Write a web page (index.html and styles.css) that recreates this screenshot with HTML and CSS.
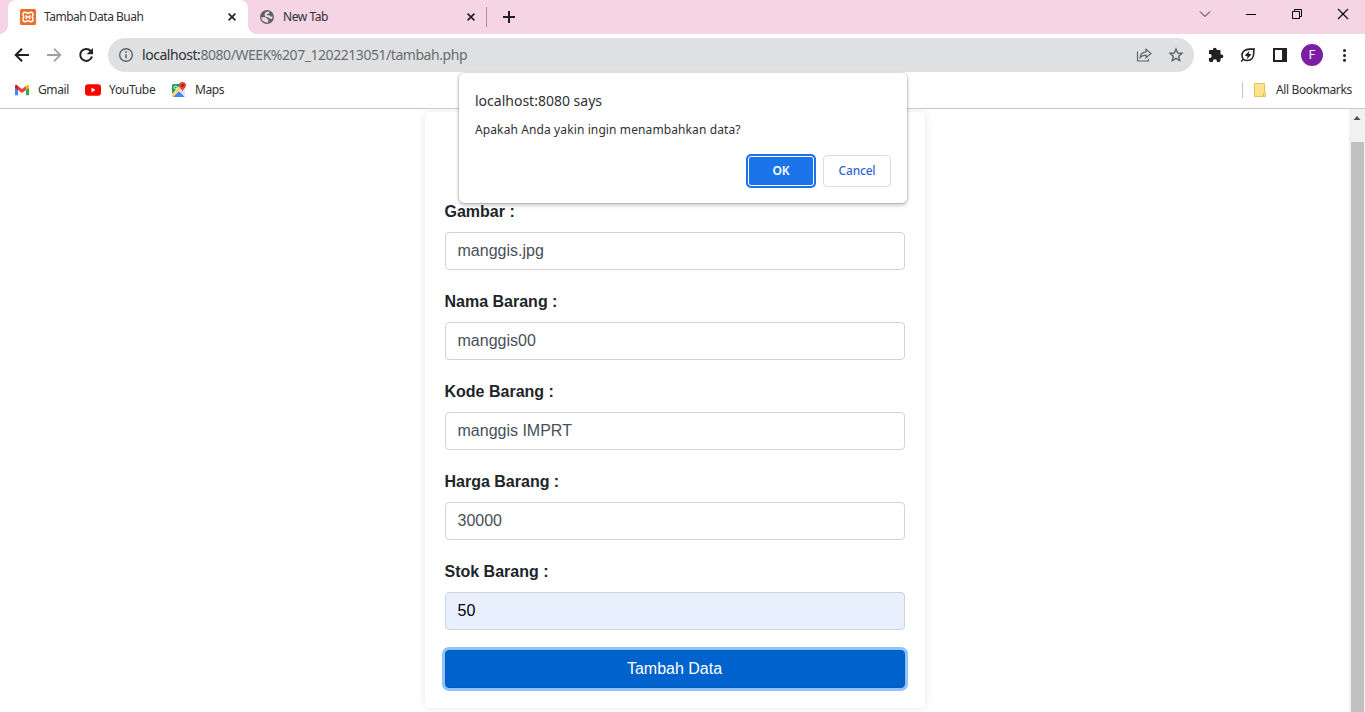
FILE: index.html
```html
<!DOCTYPE html>
<html lang="id">
<head>
<meta charset="utf-8">
<title>Tambah Data Buah</title>
<link rel="stylesheet" href="styles.css">
</head>
<body>
<header class="tabs">
  <div class="tab tab-active">
    <svg class="favicon" width="16" height="16" viewBox="0 0 16 16"><rect width="16" height="16" rx="1.5" fill="#e8702a"/><path d="M5.300 3.300C4 3.300 3 4.200 3 5.500S3.700 7.300 3.700 8 3 9.200 3 10.500s1 2.200 2.300 2.200S7 11.600 8 11.600s1.400 1.100 2.700 1.100S13 11.800 13 10.500s-.7-1.800-.7-2.500.7-1.200.7-2.500-1-2.200-2.300-2.200S9 4.400 8 4.400 6.600 3.300 5.300 3.300z" fill="none" stroke="#fff" stroke-width="1.500"/><path d="M6.200 6v4M9.800 6v4M6.200 8h3.600" stroke="#fff" stroke-width="1.300"/></svg>
    <span class="tab-title title-one">Tambah Data Buah</span>
    <svg class="close" width="8" height="8" viewBox="0 0 8 8"><path d="M.6.6l6.800 6.800M7.400.6L.6 7.400" stroke="#202124" stroke-width="1.600"/></svg>
  </div>
  <div class="tab tab-second">
    <svg class="favicon" width="16" height="16" viewBox="0 0 16 16"><circle cx="8" cy="8" r="7" fill="#5f6368"/><path d="M2.300 8.300h3.900c1.300 0 1.900.8 1.900 2h1.200v3.200C5.200 14 2.300 11.500 2.300 8.300zM9.300 2.500l1 .3c0 1.500-.6 2.100-2 2.200-.7 0-.6 1.300.2 1.300h1.300c.8 0 1.200.5 1.200 1.300h2.500v1.500l-1 1.200c-.5-.6-.9-.9-1.800-.9-.7 0-1.200-.5-1.300-1.200-2.400.2-3.800-.6-3.800-2.600 0-1.500 1-2.700 3.700-3.100z" fill="#f5d5e3"/></svg>
    <span class="tab-title title-two">New Tab</span>
    <svg class="close" width="8" height="8" viewBox="0 0 8 8"><path d="M.6.6l6.800 6.800M7.400.6L.6 7.400" stroke="#202124" stroke-width="1.600"/></svg>
  </div>
  <i class="tab-line"></i>
  <svg class="plus" width="12" height="12" viewBox="0 0 12 12"><path d="M6 0v12M0 6h12" stroke="#202124" stroke-width="2"/></svg>
  <div class="window-controls">
    <svg width="12" height="12" viewBox="0 0 12 12"><path d="M1 3.500l5 5 5-5" fill="none" stroke="#222"/></svg>
    <svg width="12" height="12" viewBox="0 0 12 12"><path d="M1 6.500h10" stroke="#000"/></svg>
    <svg width="12" height="12" viewBox="0 0 12 12"><path d="M1.500 3.500h7v7h-7zM3.500 3.500v-2h7v7h-2" fill="none" stroke="#000"/></svg>
    <svg width="12" height="12" viewBox="0 0 12 12"><path d="M1 1l10 10M11 1L1 11" stroke="#000" stroke-width="1.100"/></svg>
  </div>
</header>
<nav class="toolbar">
  <div class="nav-buttons">
    <svg width="16" height="16" viewBox="0 0 16 16"><path d="M15 8H2M8 1.700L1.700 8 8 14.300" fill="none" stroke="#202124" stroke-width="2"/></svg>
    <svg width="16" height="16" viewBox="0 0 16 16"><path d="M1 8h13M8 1.700L14.300 8 8 14.300" fill="none" stroke="#a0a1a3" stroke-width="1.800"/></svg>
    <svg width="16" height="16" viewBox="0 0 16 16"><path d="M12.800 4A6 6 0 1 0 14 9.500" fill="none" stroke="#202124" stroke-width="2"/><path d="M15 1v6.300H8.700z" fill="#202124"/></svg>
  </div>
  <div class="address">
    <svg width="16" height="16" viewBox="0 0 16 16"><circle cx="8" cy="8" r="6.300" fill="none" stroke="#5f6368" stroke-width="1.400"/><path d="M8 7.200v4M8 4.300v1.600" stroke="#5f6368" stroke-width="1.600"/></svg>
    <span class="url"><b class="host">localhost:</b>8080/WEEK%207_1202213051/tambah.php</span>
    <svg class="share" width="16" height="16" viewBox="0 0 16 16"><path d="M1.500 4.500v9.500h11v-2M4.200 10.500c.3-3.700 2.300-5.400 5.800-5.700V2.200l5 4.300-5 4.200V8.200c-2.600 0-4.400.6-5.800 2.300z" fill="none" stroke="#5f6368" stroke-width="1.200"/></svg>
    <svg class="star" width="16" height="16" viewBox="0 0 16 16"><path d="M8 2l1.700 4 4.300.4-3.300 2.900 1 4.300L8 11.300l-3.700 2.300 1-4.300L2 6.400 6.300 6z" fill="none" stroke="#5f6368" stroke-width="1.400"/></svg>
  </div>
  <div class="extensions">
    <svg width="16" height="16" viewBox="0 0 16 16"><path d="M13.500 7.500h-1V4.300c0-.8-.6-1.300-1.300-1.300H8.700V2.600a1.900 1.900 0 0 0-3.800 0V3H2.300C1.500 3 1 3.500 1 4.300v2.600h.7a2 2 0 0 1 0 4H1v2.700c0 .8.500 1.400 1.300 1.400h2.600v-.7a2 2 0 0 1 4 0v.7h2.300c.8 0 1.300-.6 1.300-1.400v-2.400h1a1.850 1.850 0 0 0 0-3.700z" fill="#202124"/></svg>
    <svg width="16" height="16" viewBox="0 0 16 16"><path d="M14 2c-1 .2-2.300.1-4.500.1C5 2.100 2 4.500 2 8.500c0 3 2.300 5 5.400 5 4 0 6.300-3 6.300-7.200 0-2 .1-3.300.3-4.300zM3.700 11.800l-2.500 2.700" fill="none" stroke="#202124" stroke-width="1.600"/><path d="M9.500 3.800L4.700 8.500l2.800.7-.7 3L11.500 7.500l-2.800-.7z" fill="#202124"/></svg>
    <svg width="16" height="16" viewBox="0 0 16 16"><path d="M1 1h14v14H1zM3 3v10h7V3z" fill="#202124" fill-rule="evenodd"/></svg>
    <span class="avatar">F</span>
    <svg width="16" height="16" viewBox="0 0 16 16"><g fill="#202124"><circle cx="8.500" cy="3.500" r="1.500"/><circle cx="8.500" cy="8.500" r="1.500"/><circle cx="8.500" cy="13.300" r="1.500"/></g></svg>
  </div>
</nav>
<div class="bookmarks">
  <svg width="16" height="16" viewBox="0 0 16 16"><path d="M1 4v9.300h3V7z" fill="#4285f4"/><path d="M12 7v6.300h3V4z" fill="#34a853"/><path d="M12 4v4l3-2.200V4c0-1.600-1.700-2-3 0z" fill="#fbbc04"/><path d="M4 4L8 7l4-3v4l-4 3-4-3z" fill="#ea4335"/><path d="M1 4v1.800L4 8V4C2.700 2 1 2.400 1 4z" fill="#c5221f"/></svg>
  <span class="bm gmail">Gmail</span>
  <svg width="16" height="16" viewBox="0 0 16 16"><rect y="2.200" width="16" height="11.600" rx="3" fill="#f00"/><path d="M6.500 5.500v5l4-2.500z" fill="#fff"/></svg>
  <span class="bm youtube">YouTube</span>
  <svg class="map-icon" width="16" height="16" viewBox="0 0 16 16"><rect x="1" y="2" width="13" height="13" rx="1.500" fill="#e4e7ea"/><path d="M1 3.500Q1 2 2.500 2H10L1 12z" fill="#1e9e58"/><path d="M2 15l6-6 6 6z" fill="#4285f4"/><path d="M1 12l8-8 2 2-9 9H1z" fill="#fdd663"/><path d="M8 9l2-2 4 5v3z" fill="#e5e8ec"/><circle cx="4.600" cy="5.500" r="1.500" fill="none" stroke="#fff"/><path d="M11.500 0A3.500 3.500 0 0 0 8 3.500c0 2.600 2.900 3 3.500 6.500.6-3.500 3.500-3.900 3.500-6.500A3.500 3.500 0 0 0 11.500 0z" fill="#e94235"/><circle cx="11.500" cy="3.500" r="1.200" fill="#8b1d18"/></svg>
  <span class="bm maps">Maps</span>
  <i class="bm-line"></i>
  <svg class="folder" width="16" height="16" viewBox="0 0 16 16"><path d="M2.500 1.500h10v9h1v4h-11z" fill="#ffe38b" stroke="#e6c65c"/><path d="M11.500 14.500v-3l1-1" fill="none" stroke="#e0b93f"/></svg>
  <span class="bm all">All Bookmarks</span>
</div>
<div class="viewport">
  <main class="page">
    <form class="card">
      <div class="heading"></div>
      <div class="group"><label>Gambar :</label><div class="field">manggis.jpg</div></div>
      <div class="group"><label>Nama Barang :</label><div class="field">manggis00</div></div>
      <div class="group"><label>Kode Barang :</label><div class="field">manggis IMPRT</div></div>
      <div class="group"><label>Harga Barang :</label><div class="field">30000</div></div>
      <div class="group"><label>Stok Barang :</label><div class="field autofill">50</div></div>
      <button class="submit" type="button">Tambah Data</button>
    </form>
  </main>
  <div class="scrollbar">
    <svg width="16" height="17" viewBox="0 0 16 17"><path d="M4.500 11L8 7l3.500 4z" fill="#505050"/></svg>
    <div class="thumb"></div>
  </div>
</div>
<div class="dialog">
  <div class="dialog-title">localhost:8080 says</div>
  <div class="dialog-text">Apakah Anda yakin ingin menambahkan data?</div>
  <div class="dialog-buttons">
    <button class="ok" type="button">OK</button>
    <button class="cancel" type="button">Cancel</button>
  </div>
</div>
</body>
</html>
```
FILE: styles.css
```css
* { box-sizing: border-box; }
body {
  margin: 0;
  width: 1365px;
  height: 712px;
  overflow: hidden;
  display: flex;
  flex-direction: column;
  background: #fff;
  font-family: "Noto Sans", "Open Sans", sans-serif;
  font-size: 12px;
  color: #303134;
  position: relative;
}
svg { display: block; flex: none; }
.tabs {
  height: 34px;
  flex: none;
  display: flex;
  align-items: center;
  background: #f5d5e3;
  padding-left: 8px;
}
.tab { height: 34px; display: flex; align-items: center; }
.tab-active {
  width: 240px;
  background: #fff;
  border-radius: 8px 8px 0 0;
  padding: 0 12px;
  position: relative;
}
.tab-active::before, .tab-active::after {
  content: "";
  position: absolute;
  bottom: 0;
  width: 8px;
  height: 8px;
}
.tab-active::before { left: -8px; background: radial-gradient(circle at 0 0, transparent 7.500px, #fff 8px); }
.tab-active::after { right: -8px; background: radial-gradient(circle at 100% 0, transparent 7.500px, #fff 8px); }
.tab-second { width: 238px; padding: 0 11px; }
.tab-title { white-space: nowrap; margin-left: 8px; line-height: 16px; }
.title-one { letter-spacing: -0.5px; }
.title-two { letter-spacing: -0.45px; }
.close { margin-left: auto; }
.tab-line { width: 1px; height: 20px; background: #a88f9b; }
.plus { margin-left: 16px; }
.window-controls { display: flex; gap: 34px; margin-left: auto; padding: 0 16px 6px 0; align-items: center; }
.toolbar { height: 42px; flex: none; display: flex; align-items: center; padding-left: 14px; }
.nav-buttons { display: flex; gap: 16px; }
.address {
  width: 1086px;
  height: 34px;
  margin-left: 14px;
  border-radius: 17px;
  background: #dfe0e2;
  display: flex;
  align-items: center;
  padding: 0 10px;
}
.url { margin-left: 8px; font-size: 14px; line-height: 20px; letter-spacing: -0.45px; color: #6a6d71; white-space: nowrap; }
.host { font-weight: 400; color: #303134; }
.share { margin-left: auto; }
.star { margin-left: 16px; }
.extensions { display: flex; align-items: center; gap: 16px; margin-left: 14px; }
.avatar {
  width: 22px;
  height: 22px;
  margin: 0 -3px;
  border-radius: 50%;
  background: #7b1fa2;
  color: #fff;
  font: 12px/22px Roboto, sans-serif;
  text-align: center;
}
.bookmarks { height: 33px; flex: none; display: flex; align-items: center; padding: 0 13px 5px 14px; border-bottom: 1px solid #c8c9cb; }
.bm { white-space: nowrap; margin-left: 8px; line-height: 16px; }
.gmail { width: 47px; letter-spacing: -0.4px; }
.youtube { width: 62px; letter-spacing: -0.3px; }
.maps { letter-spacing: -0.4px; }
.bm-line { width: 1px; height: 16px; background: #c4c6c9; margin-left: auto; }
.folder { margin-left: 9px; }
.all { width: 76px; letter-spacing: -0.38px; }
.viewport { flex: 1; display: flex; min-height: 0; }
.page { flex: 1; overflow: hidden; padding-top: 3px; }
.card {
  width: 500px;
  margin: 0 auto;
  height: 596px;
  padding: 20px;
  border-radius: 5px;
  box-shadow: 0 0 10px rgba(0, 0, 0, 0.1);
  background: #fff;
  font: 16px/24px "Liberation Sans", Arial, sans-serif;
  color: #212529;
}
.heading { height: 68px; }
.group { margin-bottom: 20px; }
label { display: block; font-weight: 700; margin-bottom: 8px; }
.field { height: 38px; padding: 6px 12px; border: 1px solid #ced4da; border-radius: 4px; color: #495057; }
.autofill { background: #e8f0fe; color: #000; }
.submit {
  display: block;
  width: 100%;
  height: 38px;
  border: 1px solid #005cbf;
  border-radius: 4px;
  background: #0062cc;
  box-shadow: 0 0 0 3px #8fc3fa;
  color: #fff;
  font: 16px/24px "Liberation Sans", Arial, sans-serif;
  padding: 0;
}
.scrollbar { width: 16px; background: #f1f1f1; display: flex; flex-direction: column; }
.thumb { width: 13px; flex: 1; margin: 16px 0 0 2px; background: #c1c1c1; }
.dialog {
  position: absolute;
  left: 459px;
  top: 73px;
  width: 448px;
  height: 130px;
  padding: 18px 16px 16px;
  border-radius: 5px;
  background: #fff;
  box-shadow: 0 0 0 1px rgba(0, 0, 0, 0.1), 0 2px 4px rgba(0, 0, 0, 0.25);
}
.dialog-title { font-size: 14px; line-height: 20px; letter-spacing: 0; }
.dialog-text { font-size: 12px; line-height: 18px; letter-spacing: 0.11px; margin-top: 10px; white-space: nowrap; }
.dialog-buttons { display: flex; justify-content: flex-end; gap: 9px; margin-top: 16px; }
.dialog-buttons button {
  height: 32px;
  padding: 0;
  border-radius: 4px;
  font: 600 12px/16px "Noto Sans", "Open Sans", sans-serif;
}
.dialog-buttons .ok { width: 66px; height: 30px; margin-top: 1px; background: #1a73e8; border: 1px solid #fff; border-radius: 3px; color: #fff; box-shadow: 0 0 0 2px #1a73e8; }
.dialog-buttons .cancel { width: 68px; background: #fff; border: 1px solid #dadce0; color: #3367d6; font-weight: 500; letter-spacing: -0.2px; }
```
